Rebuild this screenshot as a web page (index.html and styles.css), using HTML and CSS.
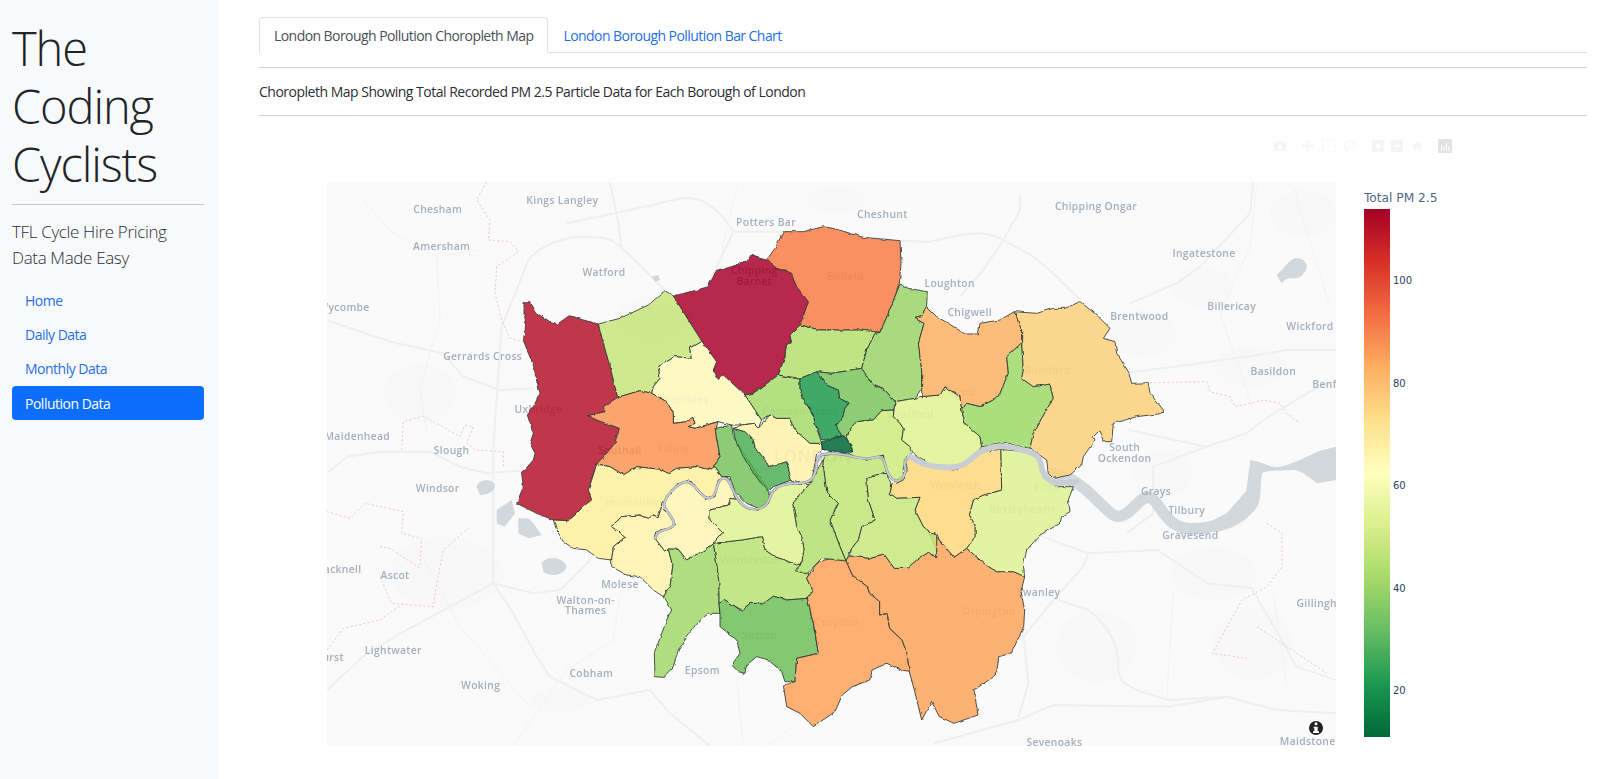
FILE: index.html
```html
<!DOCTYPE html>
<html lang="en">
<head>
  <meta charset="UTF-8">
  <title>The Coding Cyclists</title>
  <link rel="stylesheet" href="styles.css">
</head>
<body>
  <aside class="sidebar">
    <h1 class="brand">The Coding Cyclists</h1>
    <hr class="side-rule">
    <p class="lead">TFL Cycle Hire Pricing Data Made Easy</p>
    <nav class="side-nav">
      <a href="#">Home</a>
      <a href="#">Daily Data</a>
      <a href="#">Monthly Data</a>
      <a href="#" class="active">Pollution Data</a>
    </nav>
  </aside>

  <main class="content">
    <div class="tabs">
      <a href="#" class="tab active">London Borough Pollution Choropleth Map</a>
      <a href="#" class="tab">London Borough Pollution Bar Chart</a>
    </div>
    <hr class="rule first">
    <p class="caption">Choropleth Map Showing Total Recorded PM 2.5 Particle Data for Each Borough of London</p>
    <hr class="rule">

    <div class="toolbar">
      <svg class="tool camera" viewBox="0 0 14 14"><path d="M1 4h3l1-2h4l1 2h3v8H1z"/><circle cx="7" cy="8" r="2.4" fill="#fff"/></svg>
      <svg class="tool move" viewBox="0 0 14 14"><path d="M7 0l2.4 2.6H8V6h3.4V4.6L14 7l-2.6 2.4V8H8v3.4h1.4L7 14l-2.4-2.6H6V8H2.6v1.4L0 7l2.6-2.4V6H6V2.6H4.6z"/></svg>
      <svg class="tool box" viewBox="0 0 14 14"><path d="M0 0h3v1H1v2H0zM5 0h4v1H5zM11 0h3v3h-1V1h-2zM0 5h1v4H0zM13 5h1v4h-1zM0 11h1v2h2v1H0zM5 13h4v1H5zM13 11h1v3h-3v-1h2z"/></svg>
      <svg class="tool lasso" viewBox="0 0 14 14"><path d="M7 1c3.6 0 6.5 2 6.5 4.6S10.600 10 7 10c-.8 0-1.500-.1-2.200-.3.200.8.100 2-.8 3.300l-1-.5c.6-.9.800-1.800.7-3.300C1.600 8.400.5 7.100.5 5.600.5 3 3.400 1 7 1zm0 1.200c-3 0-5.300 1.500-5.300 3.400S4 8.900 7 8.900s5.300-1.400 5.300-3.300S10 2.200 7 2.200z"/></svg>
      <svg class="tool plus" viewBox="0 0 12 12"><path d="M1 0h10a1 1 0 0 1 1 1v10a1 1 0 0 1-1 1H1a1 1 0 0 1-1-1V1a1 1 0 0 1 1-1zm4 3v2H3v2h2v2h2V7h2V5H7V3z"/></svg>
      <svg class="tool minus" viewBox="0 0 12 12"><path d="M1 0h10a1 1 0 0 1 1 1v10a1 1 0 0 1-1 1H1a1 1 0 0 1-1-1V1a1 1 0 0 1 1-1zm2 5v2h6V5z"/></svg>
      <svg class="tool home" viewBox="0 0 12 12"><path d="M6 1l6 5.500h-2V11H7.500V8h-3v3H2V6.500H0z"/></svg>
      <svg class="tool logo" viewBox="0 0 14 14"><path d="M1 0h12a1 1 0 0 1 1 1v12a1 1 0 0 1-1 1H1a1 1 0 0 1-1-1V1a1 1 0 0 1 1-1zm2 6v6h1.200V6zm2.400 2v4h1.200V8zm2.400-4v8H9V4zm2.400 3v5h1.200V7z"/></svg>
    </div>

    <div class="plot">
      <svg class="map" viewBox="21 6 3027 1692" role="img" aria-label="Choropleth map of London boroughs">
        <defs>
          <filter id="jag" filterUnits="userSpaceOnUse" x="0" y="0" width="3048" height="1698" color-interpolation-filters="sRGB">
            <feTurbulence type="fractalNoise" baseFrequency="0.05" numOctaves="2" seed="4" result="noise"/>
            <feDisplacementMap in="SourceGraphic" in2="noise" scale="9" xChannelSelector="R" yChannelSelector="G"/>
          </filter>
        </defs>
        <rect class="land" x="21" y="6" width="3027" height="1692"/>

        <g class="towns">
          <ellipse cx="1000" cy="420" rx="110" ry="70"/>
          <ellipse cx="300" cy="640" rx="110" ry="90"/>
          <ellipse cx="2460" cy="460" rx="110" ry="70"/>
          <ellipse cx="2790" cy="560" rx="110" ry="60"/>
          <ellipse cx="2680" cy="1180" rx="130" ry="80"/>
          <ellipse cx="2330" cy="1400" rx="120" ry="110"/>
          <ellipse cx="2800" cy="1390" rx="120" ry="110"/>
          <ellipse cx="380" cy="1180" rx="170" ry="110"/>
          <ellipse cx="720" cy="1560" rx="90" ry="40"/>
          <ellipse cx="2530" cy="880" rx="90" ry="70"/>
          <ellipse cx="2650" cy="320" rx="90" ry="60"/>
          <ellipse cx="2950" cy="100" rx="100" ry="70"/>
          <ellipse cx="1550" cy="60" rx="90" ry="40"/>
        </g>

        <g class="roads">
          <path d="M870 6L895 130 905 205 960 255 1035 332"/>
          <path d="M625 240C660 200 720 170 790 170S880 180 900 200"/>
          <path d="M625 240L590 330 545 440 535 580 520 800 520 1110 520 1210 580 1300 650 1430 690 1490 830 1560 990 1530 1050 1600 1170 1698"/>
          <path d="M21 420L150 465 230 490 370 520 430 590 540 630 640 625"/>
          <path d="M21 880L80 830 180 815 330 815 420 860 500 880 620 870"/>
          <path d="M740 130L1000 75C1050 60 1110 40 1160 70S1220 130 1240 155L1390 155"/>
          <path d="M1240 155L1200 240 1160 320"/>
          <path d="M21 1530L140 1420 260 1350 520 1210 640 1240 720 1230 810 1140"/>
          <path d="M2100 40V90L2050 180 1990 270 1920 350"/>
          <path d="M1740 182L1830 185C1900 170 1980 140 2050 180L2140 230 2200 280 2280 360"/>
          <path d="M2430 370L2570 310 2640 260 2790 100 2800 6"/>
          <path d="M2425 578L2600 555 2780 530 2900 510 3048 510"/>
          <path d="M2660 800L2780 760 2830 720 2960 640 3048 600"/>
          <path d="M2140 1060L2305 1120 2290 1160 2200 1260 2111 1370 2125 1510 2096 1610"/>
          <path d="M2215 1260L2305 1290C2370 1340 2394 1400 2394 1450S2409 1510 2450 1530L2543 1560 2722 1550 2870 1590 3048 1600"/>
          <path d="M2305 1120L2513 1110 2662 1210 2796 1225 2930 1460 3048 1500"/>
          <path d="M1843 1690L2096 1620 2200 1575 2543 1580 2722 1550"/>
          <path d="M2425 750L2660 800 2500 860 2500 1000 2420 1060"/>
          <path class="minor" d="M350 230L360 420 300 620 320 760"/>
          <path class="minor" d="M120 50L220 160 350 230 470 210"/>
          <path class="minor" d="M2810 20L2790 200 2700 400 2800 690"/>
          <path class="minor" d="M2920 20L3030 380"/>
          <path class="minor" d="M1250 20L1200 240"/>
          <path class="minor" d="M270 1060L420 1340 630 1580"/>
          <path class="minor" d="M900 1240L880 1380 740 1470 580 1698"/>
          <path class="minor" d="M1420 1640L1340 1698M1250 1500L1270 1698"/>
          <path class="minor" d="M2560 1240L2540 1560M2860 1240L2900 1510"/>
        </g>

        <g class="county">
          <path d="M500 6L470 60 510 120 505 180 570 185 595 215 530 260 525 340 545 420 570 475 610 485"/>
          <path d="M245 810L250 725 310 708 420 770 435 735 460 740 440 790 465 810 550 815 550 860"/>
          <path d="M21 995L90 1015 135 970 250 995 245 1060 305 1075 300 1160"/>
          <path d="M180 1100L210 1105 300 1165M180 1190L215 1270 340 1280 345 1240 370 1110 450 1040"/>
          <path d="M21 1410L70 1345 180 1320 250 1270"/>
          <path d="M2490 608L2660 605 2670 635 2730 650 2745 680 2830 660 2880 670 2900 700 2940 730"/>
          <path d="M2841 1030L2886 1060V1160L2841 1220 2766 1260 2677 1420 2781 1435M2811 1340L3020 1480"/>
        </g>

        <g class="water">
          <path d="M2790 840C2830 845 2850 865 2880 860S2960 830 3000 812L3048 800V900L2990 910C2960 885 2940 868 2915 870S2840 870 2826 880C2820 920 2825 960 2811 980S2780 1015 2766 1025 2720 1050 2692 1055L2600 1060 2720 1000 2790 920z"/>
          <path d="M2870 285C2890 270 2905 240 2925 235S2965 250 2960 265 2940 295 2925 295 2900 290 2885 310z"/>
          <path d="M470 920C475 895 520 895 525 915 525 940 495 945 480 945z"/>
          <path d="M530 990L575 960 585 1000 555 1040 530 1030z"/>
          <path d="M595 1015H625L640 1030 665 1065 625 1075 595 1060z"/>
          <path d="M665 1150C680 1125 730 1130 740 1160 730 1190 690 1190 670 1175z"/>
          <path d="M995 290L1015 285 1020 300 1005 305z"/>
        </g>
        <path class="estuary" d="M2180 880C2240 880 2280 910 2330 960S2390 1020 2420 1000 2470 940 2495 955 2540 1040 2600 1045 2740 1030 2790 980L2805 860"/>

        <g class="labels">
          <text x="353" y="99">Chesham</text>
          <text x="727" y="73">Kings Langley</text>
          <text x="1338" y="137">Potters Bar</text>
          <text x="365" y="209">Amersham</text>
          <text x="852" y="289">Watford</text>
          <text x="72" y="392">Wycombe</text>
          <text x="488" y="539">Gerrards Cross</text>
          <text x="655" y="699">Uxbridge</text>
          <text x="112" y="780">Maidenhead</text>
          <text x="395" y="823">Slough</text>
          <text x="353" y="937">Windsor</text>
          <text x="1687" y="115">Cheshunt</text>
          <text x="2328" y="89">Chipping Ongar</text>
          <text x="2652" y="231">Ingatestone</text>
          <text x="1889" y="321">Loughton</text>
          <text x="1949" y="409">Chigwell</text>
          <text x="2458" y="419">Brentwood</text>
          <text x="2735" y="389">Billericay</text>
          <text x="2970" y="451">Wickford</text>
          <text x="2860" y="585">Basildon</text>
          <text x="3044" y="623">Benfleet</text>
          <text x="2414" y="813">South</text>
          <text x="2414" y="846">Ockendon</text>
          <text x="2508" y="946">Grays</text>
          <text x="2600" y="1001">Tilbury</text>
          <text x="2611" y="1077">Gravesend</text>
          <text x="50" y="1179">Bracknell</text>
          <text x="225" y="1196">Ascot</text>
          <text x="900" y="1223">Molese</text>
          <text x="797" y="1271">Walton-on-</text>
          <text x="797" y="1301">Thames</text>
          <text x="220" y="1421">Lightwater</text>
          <text x="-10" y="1443">Sandhurst</text>
          <text x="482" y="1528">Woking</text>
          <text x="814" y="1492">Cobham</text>
          <text x="1147" y="1483">Epsom</text>
          <text x="2156" y="1249">Swanley</text>
          <text x="3015" y="1281">Gillingham</text>
          <text x="2203" y="1698">Sevenoaks</text>
          <text x="2963" y="1696">Maidstone</text>
          <text class="dark" x="1303" y="283">Chipping</text>
          <text class="dark" x="1303" y="314">Barnet</text>
          <text class="under" x="1577" y="301">Enfield</text>
          <text class="under" x="1095" y="668">Wembley</text>
          <text class="dark" x="900" y="823">Southall</text>
          <text class="under" x="1060" y="817">Ealing</text>
          <text class="under" x="935" y="979">Hounslow</text>
          <text class="under" x="1440" y="706">Camden Town</text>
          <text class="under city-label" x="1480" y="845">LONDON</text>
          <text class="under" x="2183" y="583">Romford</text>
          <text class="under" x="1925" y="649">Ilford</text>
          <text class="under" x="1770" y="713">Stratford</text>
          <text class="under" x="1907" y="927">Woolwich</text>
          <text class="under" x="2180" y="933">Erith</text>
          <text class="under" x="2105" y="999">Bexleyheath</text>
          <text class="under" x="1290" y="1153">Wimbledon</text>
          <text class="under" x="1550" y="1339">Croydon</text>
          <text class="under" x="1320" y="1376">Sutton</text>
          <text class="under" x="2007" y="1306">Orpington</text>
        </g>

        <g class="boroughs">
          <polygon fill="#b5142d" points="612,368 632,368 650,400 690,425 712,432 748,407 790,420 835,432 850,490 870,560 893,652 850,680 855,695 802,707 835,722 898,745 885,790 855,825 830,852 815,900 805,930 815,960 795,975 765,1005 745,1022 700,1020 650,1000 590,970 610,920 605,880 640,840 645,820 630,790 640,760 622,705 640,680 660,640 650,600 640,555 625,520 610,480 618,430 612,400"/>
          <polygon fill="#ac022d" points="1060,348 1130,330 1165,320 1187,275 1240,258 1280,245 1295,222 1320,235 1340,240 1370,265 1412,278 1430,320 1465,365 1440,435 1410,465 1415,490 1400,490 1395,530 1375,585 1300,640 1275,645 1210,585 1195,598 1180,570 1190,545 1145,483"/>
          <polygon fill="#f97b45" points="1340,240 1365,205 1390,155 1450,155 1510,140 1550,147 1590,160 1630,172 1740,182 1743,250 1738,310 1725,350 1705,400 1680,457 1620,450 1550,450 1500,450 1440,435 1465,365 1430,320 1412,278 1370,265"/>
          <polygon fill="#c7e57b" points="835,432 900,415 985,375 1035,332 1060,348 1145,483 1108,505 1115,535 1065,530 1015,560 1020,595 1000,620 995,640 960,632 893,652 870,560 850,490"/>
          <polygon fill="#fdf8bb" points="1145,483 1190,545 1180,570 1195,598 1210,585 1275,645 1325,720 1315,745 1300,730 1265,735 1235,735 1195,725 1125,745 1105,740 1125,730 1118,712 1100,725 1060,730 1060,700 1040,665 995,640 1000,620 1020,595 1015,560 1065,530 1115,535 1108,505"/>
          <polygon fill="#fc9454" points="893,652 960,632 995,640 1040,665 1060,700 1060,730 1100,725 1118,712 1125,730 1105,740 1125,745 1195,725 1185,745 1200,830 1197,835 1175,870 1130,860 1070,865 1045,880 1020,868 950,860 910,885 870,860 830,852 855,825 885,790 898,745 835,722 802,707 855,695 850,680"/>
          <polygon fill="#fdee9e" points="830,852 870,860 910,885 950,860 1020,868 1045,880 1070,865 1130,860 1175,870 1197,835 1180,855 1205,890 1222,890 1195,900 1185,950 1155,958 1110,900 1070,915 1025,970 1025,980 1015,1010 1000,1005 985,1015 960,1005 905,1010 873,1040 890,1050 917,1070 880,1100 875,1140 835,1135 800,1110 760,1105 730,1085 710,1050 700,1020 745,1022 765,1005 795,975 815,960 805,930 815,900"/>
          <polygon fill="#fff5b3" points="1025,970 1070,915 1110,900 1155,958 1185,950 1195,900 1222,890 1250,958 1230,955 1225,975 1170,990 1170,1020 1208,1058 1180,1090 1145,1115 1100,1140 1075,1108 1045,1107 1035,1115 1005,1075 1010,1055 1055,1045 1065,1030 1050,1005 1025,980"/>
          <polygon fill="#fff2aa" points="873,1040 905,1010 960,1005 985,1015 1000,1005 1015,1010 1025,980 1050,1005 1065,1030 1055,1045 1010,1055 1005,1075 1035,1115 1045,1107 1058,1160 1050,1220 1030,1250 1000,1230 960,1190 920,1185 875,1160 875,1140 880,1100 917,1070 890,1050"/>
          <polygon fill="#a1d768" points="1045,1107 1075,1108 1100,1140 1145,1115 1180,1090 1190,1150 1197,1210 1197,1270 1200,1300 1165,1300 1130,1330 1105,1365 1075,1410 1060,1460 1030,1492 1005,1490 1003,1420 1040,1320 1055,1290 1035,1255 1030,1250 1050,1220 1058,1160"/>
          <polygon fill="#b8e273" points="1180,1090 1265,1080 1325,1070 1335,1110 1365,1130 1420,1150 1445,1155 1425,1170 1468,1180 1460,1195 1478,1235 1462,1255 1400,1260 1360,1250 1330,1270 1290,1270 1265,1290 1215,1260 1197,1270 1197,1210 1190,1150"/>
          <polygon fill="#6fbf59" points="1215,1260 1265,1292 1290,1270 1330,1272 1360,1248 1400,1260 1462,1255 1480,1330 1495,1420 1430,1435 1425,1505 1395,1505 1385,1475 1345,1440 1310,1430 1280,1455 1275,1480 1255,1475 1235,1455 1260,1420 1250,1380 1200,1340 1200,1300 1197,1270"/>
          <polygon fill="#fda258" points="1460,1195 1490,1150 1530,1135 1577,1140 1597,1185 1642,1220 1649,1240 1679,1265 1679,1305 1701,1300 1709,1345 1746,1380 1761,1420 1768,1475 1731,1465 1701,1450 1656,1470 1649,1500 1597,1520 1567,1545 1545,1595 1480,1640 1440,1600 1400,1580 1390,1515 1425,1505 1430,1435 1495,1420 1480,1330 1462,1255 1478,1235"/>
          <polygon fill="#fda35a" points="1577,1140 1589,1128 1649,1135 1694,1125 1723,1165 1761,1165 1790,1140 1828,1115 1850,1135 1850,1110 1828,1060 1858,1080 1902,1132 1940,1105 1992,1150 2029,1175 2081,1175 2114,1190 2103,1235 2114,1290 2111,1340 2074,1420 2036,1430 2029,1485 1962,1530 1974,1605 1902,1630 1858,1610 1835,1565 1805,1620 1783,1530 1768,1475 1761,1420 1746,1380 1709,1345 1701,1300 1679,1305 1679,1265 1649,1240 1642,1220 1597,1185"/>
          <polygon fill="#ddf290" points="2042,808 2120,815 2160,830 2170,890 2210,920 2260,920 2245,960 2250,995 2225,1010 2220,1030 2160,1065 2120,1110 2110,1155 2114,1190 2081,1175 2029,1175 1992,1150 1940,1105 1965,1070 1965,1035 1948,1005 1960,960 1990,945 2045,930"/>
          <polygon fill="#fdd77d" points="1715,915 1765,870 1750,840 1770,825 1805,855 1900,870 1940,855 1980,815 2042,808 2045,930 1990,945 1960,960 1948,1005 1965,1035 1965,1070 1940,1105 1902,1132 1858,1080 1850,1065 1835,1060 1810,1040 1785,990 1800,952 1730,955 1710,940"/>
          <polygon fill="#c5e77c" points="1640,895 1665,885 1700,880 1715,915 1710,940 1730,955 1800,952 1785,990 1810,1040 1835,1060 1850,1065 1850,1110 1850,1135 1828,1115 1790,1140 1761,1165 1723,1165 1694,1125 1649,1135 1589,1128 1595,1105 1615,1080 1625,1040 1665,1020 1645,960"/>
          <polygon fill="#c0e577" points="1515,825 1580,820 1640,840 1690,825 1700,880 1665,885 1640,895 1645,960 1665,1020 1625,1040 1615,1080 1595,1105 1578,1143 1560,1100 1530,1020 1555,970 1520,935 1508,850"/>
          <polygon fill="#b2df70" points="1508,840 1520,935 1555,970 1530,1020 1560,1100 1578,1143 1505,1135 1460,1182 1425,1172 1445,1150 1452,1105 1445,1070 1430,1040 1418,970 1470,910"/>
          <polygon fill="#dff292" points="1170,990 1225,975 1230,955 1250,958 1290,990 1315,990 1345,970 1355,935 1390,910 1470,910 1418,970 1430,1040 1445,1070 1452,1105 1445,1150 1430,1155 1395,1140 1365,1130 1335,1110 1325,1070 1265,1080 1180,1090 1208,1058 1170,1020"/>
          <polygon fill="#77c35c" points="1185,745 1235,735 1240,770 1270,820 1325,900 1350,935 1345,970 1315,985 1280,970 1245,935 1230,890 1205,890 1180,855 1200,830"/>
          <polygon fill="#4daf55" points="1240,745 1275,755 1300,780 1305,800 1335,840 1345,860 1400,845 1415,900 1360,920 1345,935 1300,880 1270,830 1245,775"/>
          <polygon fill="#fff2a8" points="1265,735 1300,730 1315,745 1350,705 1370,715 1410,715 1425,750 1470,790 1505,790 1507,810 1490,820 1475,905 1415,905 1400,845 1345,860 1335,840 1305,800 1300,780 1275,755 1240,745"/>
          <polygon fill="#a8da6b" points="1275,645 1300,640 1375,585 1440,598 1440,630 1455,665 1480,705 1485,730 1505,790 1470,790 1425,750 1410,715 1370,715 1350,705 1325,720"/>
          <polygon fill="#209a4e" points="1440,595 1490,575 1520,615 1555,630 1560,655 1587,670 1575,685 1565,720 1545,735 1568,770 1540,775 1505,780 1485,730 1480,705 1455,665 1440,630"/>
          <polygon fill="#b5df6f" points="1375,585 1395,530 1400,490 1415,490 1410,465 1440,435 1500,450 1620,450 1680,457 1665,460 1640,510 1625,565 1535,580 1490,575 1440,595"/>
          <polygon fill="#9ad466" points="1740,312 1765,325 1822,335 1820,375 1805,410 1785,415 1812,430 1795,490 1805,570 1805,625 1785,655 1755,660 1725,665 1690,625 1655,610 1625,565 1640,510 1665,460 1680,457 1705,400 1725,350"/>
          <polygon fill="#79c45c" points="1535,580 1625,565 1655,610 1695,630 1725,665 1722,690 1685,692 1660,720 1610,725 1590,745 1580,775 1568,770 1545,735 1565,720 1575,685 1587,670 1560,655 1555,630 1520,615 1490,575"/>
          <polygon fill="#cceb7d" points="1580,775 1590,745 1610,725 1660,720 1685,692 1722,690 1720,710 1740,730 1750,745 1745,780 1770,800 1780,815 1760,830 1750,865 1750,900 1730,910 1700,880 1690,825 1640,840 1580,820 1598,815"/>
          <polygon fill="#dff290" points="1725,665 1755,660 1785,655 1800,650 1860,645 1875,620 1920,650 1925,690 1935,730 1980,770 1985,800 1940,855 1900,865 1840,860 1790,830 1780,815 1770,800 1745,780 1750,745 1740,730 1720,710 1722,690"/>
          <polygon fill="#fdb061" points="1818,378 1850,410 1885,430 1935,462 1975,462 1980,430 2040,420 2083,395 2105,450 2105,490 2060,530 2065,580 2040,640 2020,660 1980,680 1940,670 1925,690 1920,650 1875,620 1860,645 1805,650 1805,570 1795,490 1812,430 1785,415 1805,410"/>
          <polygon fill="#9cd967" points="2105,488 2110,570 2105,595 2140,620 2190,612 2200,655 2165,715 2140,760 2130,805 2055,790 1985,800 1980,770 1935,730 1925,690 1940,670 1980,680 2020,660 2040,640 2065,580 2060,530"/>
          <polygon fill="#fdd079" points="2083,395 2150,400 2200,385 2235,385 2280,365 2330,405 2370,445 2350,475 2385,485 2390,520 2425,575 2435,610 2485,608 2490,640 2530,690 2530,700 2450,710 2380,730 2375,785 2350,785 2340,750 2320,770 2325,780 2290,830 2285,855 2250,885 2200,895 2185,880 2180,840 2130,805 2140,760 2165,715 2200,655 2190,612 2140,620 2105,595 2110,570 2105,488 2105,450"/>
          <polygon fill="#006738" points="1505,785 1540,775 1550,768 1580,775 1595,800 1598,815 1570,818 1520,810 1507,810"/>
        </g>

        <g class="thames">
          <path class="edge" d="M1005 1075Q1010 1055 1032 1050Q1055 1045 1060 1037Q1065 1030 1057 1017Q1050 1005 1037 987Q1025 970 1047 942Q1070 915 1090 907Q1110 900 1132 929Q1155 958 1170 954Q1185 950 1190 925Q1195 900 1208 895Q1222 890 1236 924Q1250 958 1265 971Q1280 985 1297 987Q1315 990 1330 980Q1345 970 1350 952Q1355 935 1372 922Q1390 910 1430 910Q1470 910 1480 890Q1490 870 1490 855Q1490 840 1495 832Q1500 825 1515 822Q1530 820 1555 822Q1580 825 1610 832Q1640 840 1665 832Q1690 825 1695 852Q1700 880 1715 895Q1730 910 1745 895Q1760 880 1755 860Q1750 840 1770 828"/>
          <path class="core" d="M1005 1075Q1010 1055 1032 1050Q1055 1045 1060 1037Q1065 1030 1057 1017Q1050 1005 1037 987Q1025 970 1047 942Q1070 915 1090 907Q1110 900 1132 929Q1155 958 1170 954Q1185 950 1190 925Q1195 900 1208 895Q1222 890 1236 924Q1250 958 1265 971Q1280 985 1297 987Q1315 990 1330 980Q1345 970 1350 952Q1355 935 1372 922Q1390 910 1430 910Q1470 910 1480 890Q1490 870 1490 855Q1490 840 1495 832Q1500 825 1515 822Q1530 820 1555 822Q1580 825 1610 832Q1640 840 1665 832Q1690 825 1695 852Q1700 880 1715 895Q1730 910 1745 895Q1760 880 1755 860Q1750 840 1770 828"/>
          <path class="wide" d="M1770 828Q1805 855 1850 860Q1900 865 1920 857Q1940 850 1960 831Q1980 812 2011 803Q2042 795 2081 803Q2120 812 2140 821Q2160 830 2165 860Q2170 890 2190 902Q2210 915 2270 905"/>
        </g>

        <circle class="info" cx="2988" cy="1644" r="21"/>
        <circle class="info-mark" cx="2988" cy="1631" r="4.500"/>
        <path class="info-mark" d="M2981 1640H2993V1654H2997V1659H2979V1654H2983V1645H2981z"/>
      </svg>

      <div class="colorbar">
        <div class="cbar-title">Total PM 2.5</div>
        <div class="cbar-body">
          <div class="cbar-scale"></div>
          <div class="cbar-ticks">
            <span>100</span>
            <span>80</span>
            <span>60</span>
            <span>40</span>
            <span>20</span>
          </div>
        </div>
      </div>
    </div>
  </main>
</body>
</html>
```

FILE: styles.css
```css
* { box-sizing: border-box; }
html, body { height: 100%; }
body { margin: 0; display: flex; overflow: hidden; background: white; color: #2b2f33; font-family: "Open Sans", "Noto Sans", sans-serif; font-size: 14px; line-height: 21px; letter-spacing: -0.5px; }

.sidebar { width: 218px; flex: none; height: 100%; padding: 19px 14px 0 12px; background: #f8f9fa; }
.brand { margin: 0; color: #212529; font-size: 47px; font-weight: 300; line-height: 58px; letter-spacing: -1.1px; }
.side-rule { margin: 11px 0 0; border: 0; border-top: 1px solid #c8cacc; }
.lead { margin: 14px 0 12px; font-size: 17px; font-weight: 300; line-height: 26px; letter-spacing: -0.35px; }
.side-nav { display: flex; flex-direction: column; }
.side-nav a { height: 34.200px; padding: 7px 13px; border-radius: 4px; color: #1f6fe8; text-decoration: none; }
.side-nav a.active { background: #0d6efd; color: white; }

.content { flex: 1; min-width: 0; padding: 17px 13px 0 41px; }
.tabs { display: flex; height: 36px; border-bottom: 1px solid #dee2e6; letter-spacing: -0.56px; }
.tab { height: 36px; padding: 7px 14px; border: 1px solid transparent; border-radius: 4px 4px 0 0; color: #1f6fe8; text-decoration: none; }
.tab.active { border-color: #dee2e6 #dee2e6 white; background: white; color: #495057; }

.rule { margin: 0; border: 0; border-top: 1px solid #cfcfcf; }
.rule.first { margin-top: 14px; }
.caption { margin: 13px 0 13px; }

.toolbar { display: flex; align-items: center; justify-content: flex-end; height: 14px; margin: 23px 135px 0 0; }
.tool { flex: none; height: 14px; fill: #f5f5f5; }
.camera { width: 14px; margin-right: 14px; }
.move { width: 13px; margin-right: 8px; }
.box { width: 13px; margin-right: 8px; }
.lasso { width: 13px; margin-right: 16px; }
.plus { width: 12px; margin-right: 7px; }
.minus { width: 12px; margin-right: 9px; }
.home { width: 11px; margin-right: 15px; }
.logo { width: 14px; fill: #e2e2e2; }

.plot { display: flex; margin: 29px 0 0 68px; }
.map { flex: none; width: 1009px; height: 564px; filter: blur(0.35px); }
.land { fill: #fafafa; }
.towns { fill: #f8f8f8; }
.roads { fill: none; stroke: #eeefef; stroke-width: 6; stroke-linejoin: round; }
.roads .minor { stroke: #f2f2f3; stroke-width: 3; }
.county { fill: none; stroke: #e8c6cb; stroke-width: 3; stroke-dasharray: 6 7; }
.water { fill: #d3d8dc; }
.estuary { fill: none; stroke: #d3d8dc; stroke-width: 34; }
.labels { fill: #a4aebd; font-size: 31px; font-weight: 600; letter-spacing: 1px; text-anchor: middle; }
.labels .under { fill: #c0c7d1; }
.labels .dark { fill: #7d8595; }
.labels .city-label { font-size: 48px; letter-spacing: 4px; }
.boroughs { filter: url(#jag); }
.boroughs polygon { fill-opacity: 0.85; stroke: #2f3a36; stroke-width: 2.600; stroke-linejoin: round; }
.thames { fill: none; stroke-linejoin: round; stroke-linecap: round; }
.thames .edge { stroke: #85898b; stroke-width: 8; }
.thames .core { stroke: #c8ced4; stroke-width: 5; }
.thames .wide { stroke: #c8ced4; stroke-width: 17; }
.info { fill: #222; }
.info-mark { fill: white; }

.colorbar { flex: none; margin: 9px 0 0 28px; }
.cbar-title { height: 15px; margin-bottom: 3px; color: #506784; font-family: "DejaVu Sans", sans-serif; font-size: 12.200px; line-height: 15px; letter-spacing: 0; white-space: nowrap; }
.cbar-body { display: flex; }
.cbar-scale { width: 26px; height: 528px; background: linear-gradient(#a50026, #d73027 10%, #f46d43 20%, #fdae61 30%, #fee08b 40%, #ffffbf 50%, #d9ef8b 60%, #a6d96a 70%, #66bd63 80%, #1a9850 90%, #006837); }
.cbar-ticks { display: flex; flex-direction: column; gap: 90.500px; padding: 66px 0 0 3px; color: #2a3f5f; font-family: "DejaVu Sans", sans-serif; font-size: 10px; line-height: 12px; letter-spacing: 0; }
.cbar-ticks span { display: block; height: 12px; }
```
